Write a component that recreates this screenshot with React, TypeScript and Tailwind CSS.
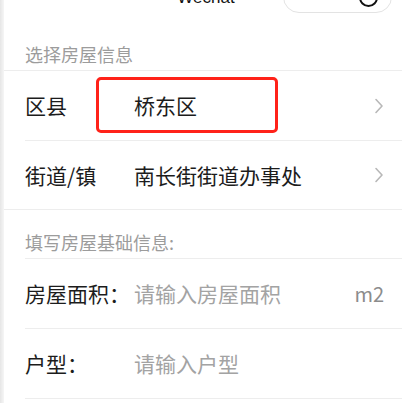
import React from "react";

type RowProps = {
  label: string;
  value?: string;
  placeholder?: string;
  suffix?: string;
  arrow?: boolean;
  inset?: boolean;
  height: string;
  children?: React.ReactNode;
};

const Chevron: React.FC = () => (
  <svg width="10" height="16" viewBox="0 0 10 16" fill="none" className="shrink-0">
    <path d="M2 1.5 L8 8 L2 14.5" stroke="#b8b8b8" strokeWidth="1.6" strokeLinecap="round" strokeLinejoin="round" />
  </svg>
);

const FormRow: React.FC<RowProps> = ({ label, value, placeholder, suffix, arrow, inset, height, children }) => (
  <div className={`relative pl-[21px] ${height} ${inset ? "" : "border-b border-[#ededed]"}`}>
    <div className={`h-full flex items-center pr-[18px] ${inset ? "border-b border-[#ededed]" : ""}`}>
      <span className="w-[109px] shrink-0 text-[21px] leading-none text-[#1c1c1c]">{label}</span>
      {value ? (
        <span className="flex-1 text-[21px] leading-none text-[#1c1c1c]">{value}</span>
      ) : (
        <span className="flex-1 text-[21px] leading-none text-[#a3a3a3]">{placeholder}</span>
      )}
      {suffix && <span className="text-[20px] leading-none text-[#8c8c8c]">{suffix}</span>}
      {arrow && <Chevron />}
    </div>
    {children}
  </div>
);

const SectionTitle: React.FC<{ text: string; inset?: boolean; height: string }> = ({ text, inset, height }) => (
  <div className={`pl-[21px] ${height} ${inset ? "" : "border-b border-[#ededed]"}`}>
    <div className={`h-full flex items-end pb-[7px] ${inset ? "border-b border-[#ededed]" : ""}`}>
      <span className="text-[18px] leading-[18px] text-[#9c9c9c]">{text}</span>
    </div>
  </div>
);

const App: React.FC = () => {
  return (
    <div
      className="w-[402px] h-[403px] overflow-hidden bg-white flex"
      style={{ fontFamily: '"Noto Sans CJK SC", "Liberation Sans", sans-serif' }}
    >
      <div className="w-[4px] shrink-0 bg-linear-to-r from-[#e6e6e6] to-[#f6f6f6]" />
      <div className="flex-1 flex flex-col">
        {/* nav bar, mostly scrolled out of view */}
        <div className="relative h-[48px] -mt-[27px] shrink-0 flex items-center justify-center">
          <span
            className="text-[17px] leading-none text-[#111] pl-[6px]"
            style={{ fontFamily: '"Liberation Sans", sans-serif' }}
          >
            Wechat
          </span>
          <div className="absolute left-[279px] top-[8px] w-[109px] h-[32px] rounded-full border border-[#e3e3e3] flex items-center justify-end pr-[13px]">
            <div className="w-[19px] h-[19px] rounded-full border-[2px] border-[#111] flex items-center justify-center">
              <div className="w-[5px] h-[5px] rounded-full bg-[#111]" />
            </div>
          </div>
        </div>

        <SectionTitle text="选择房屋信息" height="h-[50px]" />
        <FormRow label="区县" value="桥东区" arrow inset height="h-[70px]">
          <div className="absolute left-[92px] top-[6px] w-[182px] h-[56px] border-[3px] border-[#ff2219] rounded-[5px]" />
        </FormRow>
        <FormRow label="街道/镇" value="南长街街道办事处" arrow height="h-[69px]" />

        <SectionTitle text="填写房屋基础信息:" inset height="h-[49px]" />
        <FormRow label="房屋面积：" placeholder="请输入房屋面积" suffix="m2" inset height="h-[70px]" />
        <FormRow label="户型：" placeholder="请输入户型" inset height="h-[70px]" />
      </div>
    </div>
  );
};

export default App;
